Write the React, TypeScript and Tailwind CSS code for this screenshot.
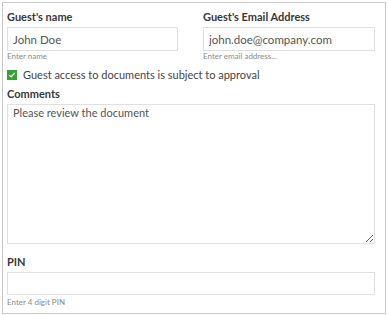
import React from "react";

const font = { fontFamily: "Lato, 'Open Sans', sans-serif" };

function Label({ children, className = "" }: { children: React.ReactNode; className?: string }) {
  return <div className={"text-[11px] leading-[14px] font-bold text-[#383838] mb-[3px] " + className}>{children}</div>;
}

export default function App() {
  return (
    <div className="w-[388px] h-[315px] bg-white p-[2px]" style={font}>
      <div className="w-[384px] h-[312px] border border-[#c8c8c8] pl-[4px] pr-[10px] pt-[7px]">
        <div className="grid grid-cols-[171px_1fr] gap-x-[25px]">
          <div>
            <Label>Guest's name</Label>
            <input
              defaultValue="John Doe"
              className="block w-full h-[24px] border border-[#e0e0e0] px-[5px] text-[11.5px] text-[#555] outline-none"
            />
            <div className="text-[8px] leading-[10px] text-[#8a8a8a]">Enter name</div>
          </div>
          <div>
            <Label>Guest's Email Address</Label>
            <input
              defaultValue="john.doe@company.com"
              className="block w-full h-[24px] border border-[#e0e0e0] px-[5px] text-[11.5px] text-[#555] outline-none"
            />
            <div className="text-[8px] leading-[10px] text-[#8a8a8a]">Enter email address...</div>
          </div>
        </div>
        <div className="flex items-center gap-[6px] mt-[7px] h-[14px]">
          <div className="w-[10px] h-[10px] bg-[#34a334] flex items-center justify-center shrink-0">
            <svg width="8" height="8" viewBox="0 0 8 8">
              <path d="M1.3 4.1 L3.2 5.9 L6.7 2" stroke="white" strokeWidth="1.3" fill="none" />
            </svg>
          </div>
          <span className="text-[11px] leading-[14px] text-[#444]">Guest access to documents is subject to approval</span>
        </div>
        <div className="mt-[5px]">
          <Label>Comments</Label>
          <textarea
            defaultValue="Please review the document"
            className="block w-full h-[140px] border border-[#e0e0e0] px-[5px] pt-[1px] text-[11px] leading-[14px] text-[#555] outline-none resize-y"
          />
        </div>
        <div className="mt-[11px]">
          <Label>PIN</Label>
          <input className="block w-full h-[23px] border border-[#e0e0e0] px-[5px] text-[11.5px] text-[#555] outline-none" />
          <div className="text-[8px] leading-[10px] text-[#8a8a8a] mt-[2px]">Enter 4 digit PIN</div>
        </div>
      </div>
    </div>
  );
}
